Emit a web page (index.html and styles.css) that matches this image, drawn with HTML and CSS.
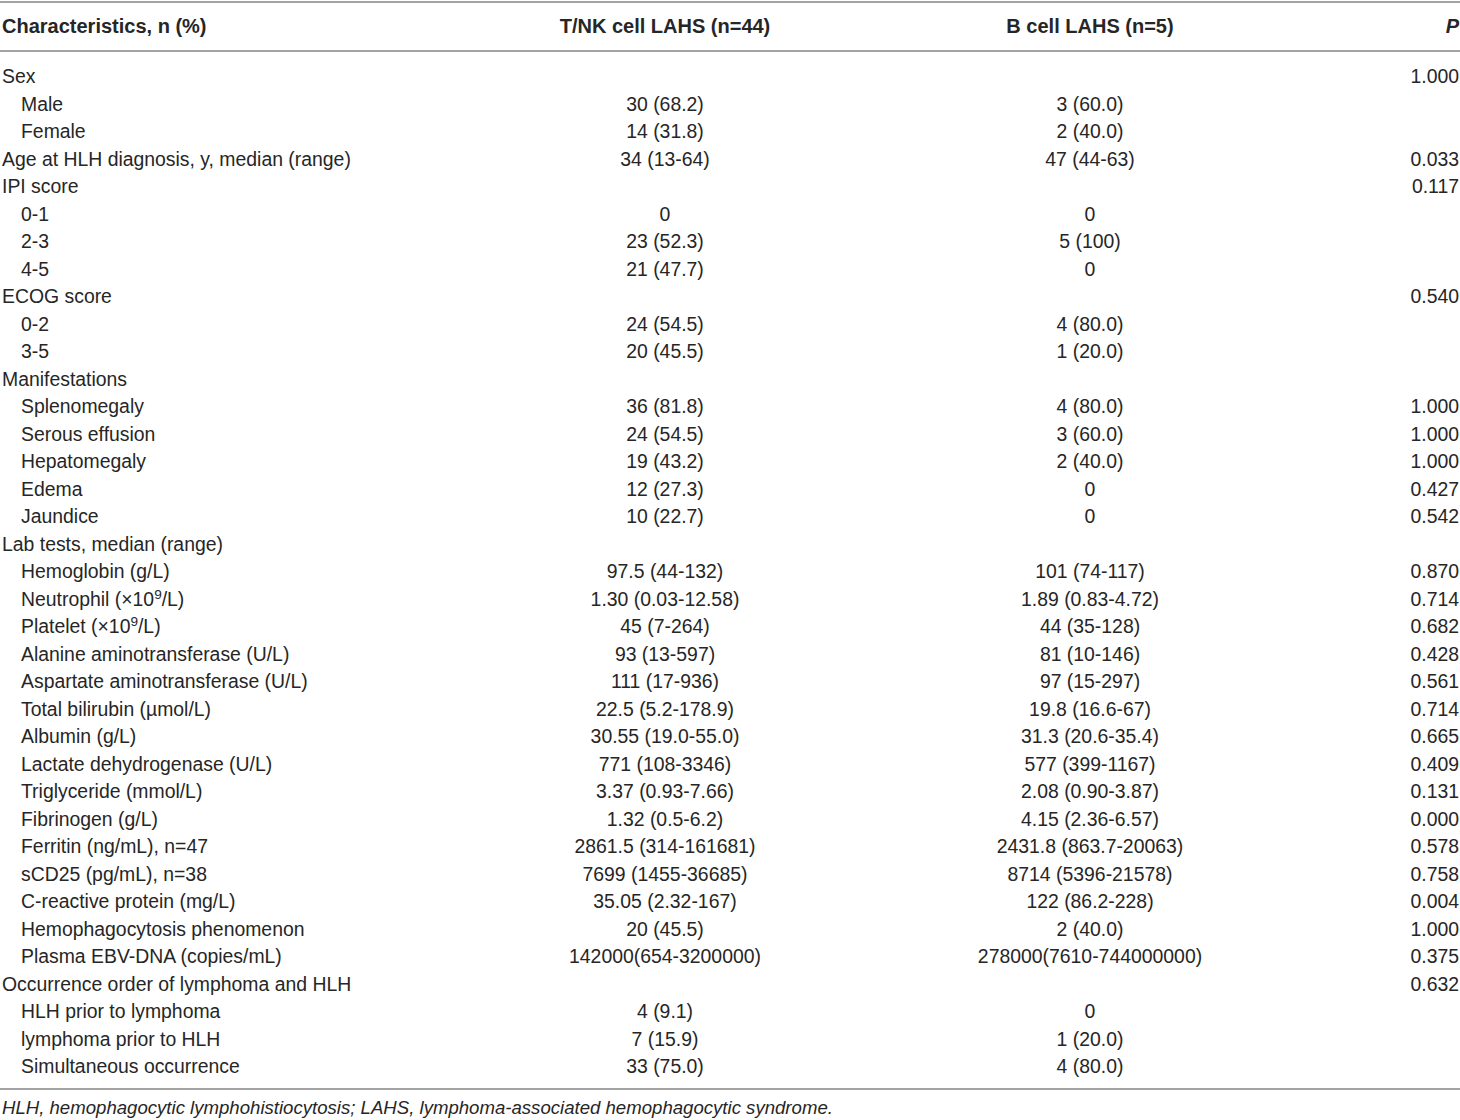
FILE: index.html
```html
<!DOCTYPE html>
<html lang="en">
<head>
  <meta charset="UTF-8">
  <title>Characteristics of LAHS patients</title>
  <link rel="stylesheet" href="styles.css">
</head>
<body>

  <div class="table">
    <div class="row head">
      <div class="c1">Characteristics, n (%)</div>
      <div class="c2">T/NK cell LAHS (n=44)</div>
      <div class="c3">B cell LAHS (n=5)</div>
      <div class="c4"><i>P</i></div>
    </div>

    <div class="body">
      <div class="row"><div class="c1">Sex</div><div class="c2"></div><div class="c3"></div><div class="c4">1.000</div></div>
      <div class="row"><div class="c1 sub">Male</div><div class="c2">30 (68.2)</div><div class="c3">3 (60.0)</div><div class="c4"></div></div>
      <div class="row"><div class="c1 sub">Female</div><div class="c2">14 (31.8)</div><div class="c3">2 (40.0)</div><div class="c4"></div></div>
      <div class="row"><div class="c1">Age at HLH diagnosis, y, median (range)</div><div class="c2">34 (13-64)</div><div class="c3">47 (44-63)</div><div class="c4">0.033</div></div>
      <div class="row"><div class="c1">IPI score</div><div class="c2"></div><div class="c3"></div><div class="c4">0.117</div></div>
      <div class="row"><div class="c1 sub">0-1</div><div class="c2">0</div><div class="c3">0</div><div class="c4"></div></div>
      <div class="row"><div class="c1 sub">2-3</div><div class="c2">23 (52.3)</div><div class="c3">5 (100)</div><div class="c4"></div></div>
      <div class="row"><div class="c1 sub">4-5</div><div class="c2">21 (47.7)</div><div class="c3">0</div><div class="c4"></div></div>
      <div class="row"><div class="c1">ECOG score</div><div class="c2"></div><div class="c3"></div><div class="c4">0.540</div></div>
      <div class="row"><div class="c1 sub">0-2</div><div class="c2">24 (54.5)</div><div class="c3">4 (80.0)</div><div class="c4"></div></div>
      <div class="row"><div class="c1 sub">3-5</div><div class="c2">20 (45.5)</div><div class="c3">1 (20.0)</div><div class="c4"></div></div>
      <div class="row"><div class="c1">Manifestations</div><div class="c2"></div><div class="c3"></div><div class="c4"></div></div>
      <div class="row"><div class="c1 sub">Splenomegaly</div><div class="c2">36 (81.8)</div><div class="c3">4 (80.0)</div><div class="c4">1.000</div></div>
      <div class="row"><div class="c1 sub">Serous effusion</div><div class="c2">24 (54.5)</div><div class="c3">3 (60.0)</div><div class="c4">1.000</div></div>
      <div class="row"><div class="c1 sub">Hepatomegaly</div><div class="c2">19 (43.2)</div><div class="c3">2 (40.0)</div><div class="c4">1.000</div></div>
      <div class="row"><div class="c1 sub">Edema</div><div class="c2">12 (27.3)</div><div class="c3">0</div><div class="c4">0.427</div></div>
      <div class="row"><div class="c1 sub">Jaundice</div><div class="c2">10 (22.7)</div><div class="c3">0</div><div class="c4">0.542</div></div>
      <div class="row"><div class="c1">Lab tests, median (range)</div><div class="c2"></div><div class="c3"></div><div class="c4"></div></div>
      <div class="row"><div class="c1 sub">Hemoglobin (g/L)</div><div class="c2">97.5 (44-132)</div><div class="c3">101 (74-117)</div><div class="c4">0.870</div></div>
      <div class="row"><div class="c1 sub">Neutrophil (×10<sup>9</sup>/L)</div><div class="c2">1.30 (0.03-12.58)</div><div class="c3">1.89 (0.83-4.72)</div><div class="c4">0.714</div></div>
      <div class="row"><div class="c1 sub">Platelet (×10<sup>9</sup>/L)</div><div class="c2">45 (7-264)</div><div class="c3">44 (35-128)</div><div class="c4">0.682</div></div>
      <div class="row"><div class="c1 sub">Alanine aminotransferase (U/L)</div><div class="c2">93 (13-597)</div><div class="c3">81 (10-146)</div><div class="c4">0.428</div></div>
      <div class="row"><div class="c1 sub">Aspartate aminotransferase (U/L)</div><div class="c2">111 (17-936)</div><div class="c3">97 (15-297)</div><div class="c4">0.561</div></div>
      <div class="row"><div class="c1 sub">Total bilirubin (µmol/L)</div><div class="c2">22.5 (5.2-178.9)</div><div class="c3">19.8 (16.6-67)</div><div class="c4">0.714</div></div>
      <div class="row"><div class="c1 sub">Albumin (g/L)</div><div class="c2">30.55 (19.0-55.0)</div><div class="c3">31.3 (20.6-35.4)</div><div class="c4">0.665</div></div>
      <div class="row"><div class="c1 sub">Lactate dehydrogenase (U/L)</div><div class="c2">771 (108-3346)</div><div class="c3">577 (399-1167)</div><div class="c4">0.409</div></div>
      <div class="row"><div class="c1 sub">Triglyceride (mmol/L)</div><div class="c2">3.37 (0.93-7.66)</div><div class="c3">2.08 (0.90-3.87)</div><div class="c4">0.131</div></div>
      <div class="row"><div class="c1 sub">Fibrinogen (g/L)</div><div class="c2">1.32 (0.5-6.2)</div><div class="c3">4.15 (2.36-6.57)</div><div class="c4">0.000</div></div>
      <div class="row"><div class="c1 sub">Ferritin (ng/mL), n=47</div><div class="c2">2861.5 (314-161681)</div><div class="c3">2431.8 (863.7-20063)</div><div class="c4">0.578</div></div>
      <div class="row"><div class="c1 sub">sCD25 (pg/mL), n=38</div><div class="c2">7699 (1455-36685)</div><div class="c3">8714 (5396-21578)</div><div class="c4">0.758</div></div>
      <div class="row"><div class="c1 sub">C-reactive protein (mg/L)</div><div class="c2">35.05 (2.32-167)</div><div class="c3">122 (86.2-228)</div><div class="c4">0.004</div></div>
      <div class="row"><div class="c1 sub">Hemophagocytosis phenomenon</div><div class="c2">20 (45.5)</div><div class="c3">2 (40.0)</div><div class="c4">1.000</div></div>
      <div class="row"><div class="c1 sub">Plasma EBV-DNA (copies/mL)</div><div class="c2">142000(654-3200000)</div><div class="c3">278000(7610-744000000)</div><div class="c4">0.375</div></div>
      <div class="row"><div class="c1">Occurrence order of lymphoma and HLH</div><div class="c2"></div><div class="c3"></div><div class="c4">0.632</div></div>
      <div class="row"><div class="c1 sub">HLH prior to lymphoma</div><div class="c2">4 (9.1)</div><div class="c3">0</div><div class="c4"></div></div>
      <div class="row"><div class="c1 sub">lymphoma prior to HLH</div><div class="c2">7 (15.9)</div><div class="c3">1 (20.0)</div><div class="c4"></div></div>
      <div class="row"><div class="c1 sub">Simultaneous occurrence</div><div class="c2">33 (75.0)</div><div class="c3">4 (80.0)</div><div class="c4"></div></div>
    </div>
  </div>

  <p class="note">HLH, hemophagocytic lymphohistiocytosis; LAHS, lymphoma-associated hemophagocytic syndrome.</p>

</body>
</html>
```

FILE: styles.css
```css
/* tabel karakteristik */
body {
  margin: 0;
  padding: 0;
  background-color: #fff;
  color: #262626;
  font-family: "Liberation Sans", Arial, sans-serif;
  font-size: 19.4px;
}

.table {
  margin-top: 1px;
  border-top: 2px solid #a3a3a3;
  border-bottom: 2px solid #a3a3a3;
}

.row {
  display: grid;
  grid-template-columns: 450px 430px 420px 1fr;
  height: 27.5px;
  line-height: 27.5px;
  white-space: nowrap;
}

.head {
  height: 47px;
  line-height: 47px;
  font-weight: bold;
  font-size: 20px;
  border-bottom: 2px solid #a3a3a3;
}

.body {
  padding: 11px 0 7px;
}

.c1 {
  padding-left: 2px;
}

.c1.sub {
  padding-left: 21px;
}

.c2,
.c3 {
  text-align: center;
}

.c4 {
  text-align: right;
  padding-right: 1px;
}

sup {
  font-size: 0.7em;
  line-height: 0;
  vertical-align: 0.55em;
}

.note {
  margin: 0;
  padding: 6px 0 0 2px;
  font-size: 18.6px;
  font-style: italic;
  line-height: 24px;
}
```
